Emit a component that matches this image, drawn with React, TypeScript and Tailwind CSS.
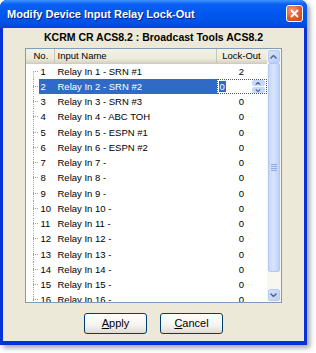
import React from 'react';

const rows = [
  { no: 1, name: 'Relay In 1 - SRN #1', lock: '2' },
  { no: 2, name: 'Relay In 2 - SRN #2', lock: '0' },
  { no: 3, name: 'Relay In 3 - SRN #3', lock: '0' },
  { no: 4, name: 'Relay In 4 - ABC TOH', lock: '0' },
  { no: 5, name: 'Relay In 5 - ESPN #1', lock: '0' },
  { no: 6, name: 'Relay In 6 - ESPN #2', lock: '0' },
  ...Array.from({ length: 10 }, (_, i) => ({ no: i + 7, name: `Relay In ${i + 7} -`, lock: '0' })),
];

const font = "font-['Tahoma','Liberation_Sans',Arial,sans-serif]";

function TreeLine({ first }: { first: boolean }) {
  return (
    <svg width="8" height="16" className="ml-[5px] shrink-0">
      <line x1="2.5" y1={first ? 7.5 : 0} x2="2.5" y2="16" stroke="#a0a0a0" strokeDasharray="1 1" />
      <line x1="2" y1="7.5" x2="8" y2="7.5" stroke="#a0a0a0" strokeDasharray="1 1" />
    </svg>
  );
}

function Chevron({ up, size = 7 }: { up: boolean; size?: number }) {
  return (
    <svg width={size} height={size - 3} viewBox="0 0 7 4">
      <path d={up ? 'M0.5 3.5 L3.5 0.5 L6.5 3.5' : 'M0.5 0.5 L3.5 3.5 L6.5 0.5'} fill="none" stroke="#4d6185" strokeWidth="1.4" />
    </svg>
  );
}

function Scrollbar() {
  return (
    <div className="w-[14px] shrink-0 flex flex-col bg-[#f7f6f0]">
      <div className="h-[13px] mt-[1px] mx-px flex items-center justify-center rounded-[2px] border border-[#b7cbf5] bg-[linear-gradient(135deg,#d6e3fd,#b9cffb)]">
        <Chevron up />
      </div>
      <div className="h-[209px] mx-px flex items-center justify-center rounded-[2px] border border-[#b4c8f2] bg-[linear-gradient(90deg,#c7d8fb,#d7e4fd_50%,#bdd0fa)]">
        <div className="flex flex-col gap-px">
          <div className="w-[6px] h-px bg-[#8eabe8]" />
          <div className="w-[6px] h-px bg-[#8eabe8]" />
          <div className="w-[6px] h-px bg-[#8eabe8]" />
          <div className="w-[6px] h-px bg-[#8eabe8]" />
        </div>
      </div>
      <div className="flex-1" />
      <div className="h-[12px] mb-px mx-px flex items-center justify-center rounded-[2px] border border-[#b7cbf5] bg-[linear-gradient(135deg,#d6e3fd,#b9cffb)]">
        <Chevron up={false} />
      </div>
    </div>
  );
}

export default function App() {
  return (
    <div className={`w-[316px] h-[353px] bg-white ${font}`}>
      <div className="w-[307px] h-[345px] flex flex-col rounded-t-[7px] bg-[#0831d9] shadow-[3px_3px_5px_rgba(0,0,0,0.35)]">
        {/* title bar */}
        <div className="h-[28px] shrink-0 flex items-center justify-between pl-[7px] pr-[4px] rounded-t-[7px] bg-[linear-gradient(180deg,#3d95ff_0%,#0a60f2_15%,#0058ee_45%,#0052e6_80%,#0046d6_100%)]">
          <span className="text-white font-bold text-[11px] [text-shadow:1px_1px_0_#0a1c8f]">
            Modify Device Input Relay Lock-Out
          </span>
          <div className="w-[17px] h-[17px] mb-[1px] flex items-center justify-center rounded-[3px] border border-white bg-[radial-gradient(circle_at_35%_30%,#f29a7c,#e2532e_60%,#c9401f)]">
            <svg width="9" height="9" viewBox="0 0 9 9">
              <path d="M1.5 1.5 L7.5 7.5 M7.5 1.5 L1.5 7.5" stroke="white" strokeWidth="1.8" strokeLinecap="round" />
            </svg>
          </div>
        </div>

        {/* body */}
        <div className="flex-1 mx-[3px] mb-[4px] bg-[#ece9d8] flex flex-col items-center">
          <div className="h-[19px] pt-[1px] flex items-center font-bold text-[10.5px] text-black">
            KCRM CR ACS8.2 : Broadcast Tools ACS8.2
          </div>

          <div className="w-[257px] h-[255px] ml-[-1px] mt-px border border-[#7f9db9] bg-white flex overflow-hidden text-[9.5px] text-black">
            <div className="flex-1 flex flex-col overflow-hidden">
              {/* header */}
              <div className="h-[15px] shrink-0 flex bg-[linear-gradient(180deg,#f3f2ea,#ebeadb_70%,#d6d3c4)] border-b border-[#d0cdc0]">
                <div className="w-[29px] flex items-center pl-[8px] border-r border-[#c7c5b2]">No.</div>
                <div className="w-[162px] flex items-center pl-[3px] border-r border-[#c7c5b2]">Input Name</div>
                <div className="flex-1 flex items-center justify-center">Lock-Out</div>
              </div>
              {/* rows */}
              {rows.map((r) => {
                const sel = r.no === 2;
                return (
                  <div key={r.no} className="h-[15.25px] shrink-0 flex items-center overflow-hidden">
                    <TreeLine first={r.no === 1} />
                    <div className={`w-[178px] h-[15px] flex items-center ${sel ? 'bg-[#316ac5] text-white' : ''}`}>
                      <span className="w-[17px] pl-[2px]">{r.no}</span>
                      <span className="pl-[2px] whitespace-nowrap">{r.name}</span>
                    </div>
                    {sel ? (
                      <div className="w-[50px] h-[15px] flex items-center justify-between border border-dotted border-[#555] bg-white">
                        <span className="ml-[1px] px-[1px] bg-[#316ac5] text-white leading-[11px]">0</span>
                        <div className="w-[13px] h-[13px] flex flex-col gap-px mr-px">
                          <div className="flex-1 flex items-center justify-center rounded-[2px] bg-[#c6d7fc]">
                            <Chevron up size={6} />
                          </div>
                          <div className="flex-1 flex items-center justify-center rounded-[2px] bg-[#c6d7fc]">
                            <Chevron up={false} size={6} />
                          </div>
                        </div>
                      </div>
                    ) : (
                      <div className="w-[50px] text-center">{r.lock}</div>
                    )}
                  </div>
                );
              })}
            </div>
            <Scrollbar />
          </div>

          <div className="flex gap-[13px] mt-[10px] text-[11px] text-black">
            <button className="w-[63px] h-[21px] rounded-[3px] border border-[#003c74] bg-[linear-gradient(180deg,#ffffff,#f4f3ee_60%,#dedcd3)]">
              <span className="underline">A</span>pply
            </button>
            <button className="w-[63px] h-[21px] rounded-[3px] border border-[#003c74] bg-[linear-gradient(180deg,#ffffff,#f4f3ee_60%,#dedcd3)]">
              <span className="underline">C</span>ancel
            </button>
          </div>
        </div>
      </div>
    </div>
  );
}
